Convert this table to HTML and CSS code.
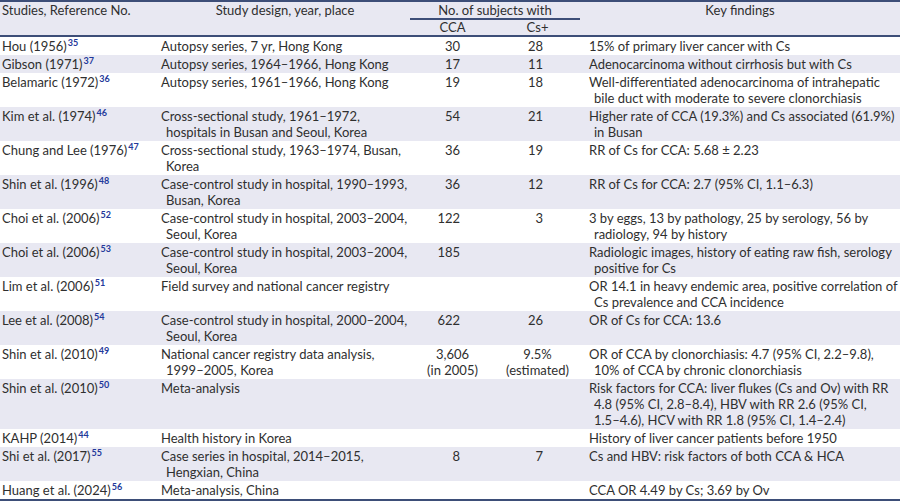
FILE: index.html
```html
<!DOCTYPE html>
<html lang="en">
<head>
<meta charset="utf-8">
<title>Studies on clonorchiasis and cholangiocarcinoma</title>
<link rel="stylesheet" href="styles.css">
</head>
<body>
<div class="wrap">
<table class="tbl">
<colgroup>
<col class="c1"><col class="c2"><col class="c3"><col class="c4"><col class="c5">
</colgroup>
<thead>
<tr class="hrow1">
<th rowspan="2" class="h-study">Studies, Reference No.</th>
<th rowspan="2" class="h-design">Study design, year, place</th>
<th colspan="2" class="h-group">No. of subjects with</th>
<th rowspan="2" class="h-key">Key findings</th>
</tr>
<tr class="hrow2">
<th class="h-sub">CCA</th>
<th class="h-sub">Cs+</th>
</tr>
</thead>
<tbody>
<tr><td class="study">Hou (1956)<sup class="ref">35</sup></td><td class="design">Autopsy series, 7 yr, Hong Kong</td><td class="num">30</td><td class="num cs">28</td><td class="key">15% of primary liver cancer with Cs</td></tr>
<tr><td class="study">Gibson (1971)<sup class="ref">37</sup></td><td class="design">Autopsy series, 1964–1966, Hong Kong</td><td class="num">17</td><td class="num cs">11</td><td class="key">Adenocarcinoma without cirrhosis but with Cs</td></tr>
<tr><td class="study">Belamaric (1972)<sup class="ref">36</sup></td><td class="design">Autopsy series, 1961–1966, Hong Kong</td><td class="num">19</td><td class="num cs">18</td><td class="key">Well-differentiated adenocarcinoma of intrahepatic<br>bile duct with moderate to severe clonorchiasis</td></tr>
<tr><td class="study">Kim et al. (1974)<sup class="ref">46</sup></td><td class="design">Cross-sectional study, 1961–1972,<br>hospitals in Busan and Seoul, Korea</td><td class="num">54</td><td class="num cs">21</td><td class="key">Higher rate of CCA (19.3%) and Cs associated (61.9%)<br>in Busan</td></tr>
<tr><td class="study">Chung and Lee (1976)<sup class="ref">47</sup></td><td class="design">Cross-sectional study, 1963–1974, Busan,<br>Korea</td><td class="num">36</td><td class="num cs">19</td><td class="key">RR of Cs for CCA: 5.68 ± 2.23</td></tr>
<tr><td class="study">Shin et al. (1996)<sup class="ref">48</sup></td><td class="design">Case-control study in hospital, 1990–1993,<br>Busan, Korea</td><td class="num">36</td><td class="num cs">12</td><td class="key">RR of Cs for CCA: 2.7 (95% CI, 1.1–6.3)</td></tr>
<tr><td class="study">Choi et al. (2006)<sup class="ref">52</sup></td><td class="design">Case-control study in hospital, 2003–2004,<br>Seoul, Korea</td><td class="num">122</td><td class="num cs">3</td><td class="key">3 by eggs, 13 by pathology, 25 by serology, 56 by<br>radiology, 94 by history</td></tr>
<tr><td class="study">Choi et al. (2006)<sup class="ref">53</sup></td><td class="design">Case-control study in hospital, 2003–2004,<br>Seoul, Korea</td><td class="num">185</td><td class="num cs"></td><td class="key">Radiologic images, history of eating raw fish, serology<br>positive for Cs</td></tr>
<tr><td class="study">Lim et al. (2006)<sup class="ref">51</sup></td><td class="design">Field survey and national cancer registry</td><td class="num"></td><td class="num cs"></td><td class="key">OR 14.1 in heavy endemic area, positive correlation of<br>Cs prevalence and CCA incidence</td></tr>
<tr><td class="study">Lee et al. (2008)<sup class="ref">54</sup></td><td class="design">Case-control study in hospital, 2000–2004,<br>Seoul, Korea</td><td class="num">622</td><td class="num cs">26</td><td class="key">OR of Cs for CCA: 13.6</td></tr>
<tr><td class="study">Shin et al. (2010)<sup class="ref">49</sup></td><td class="design">National cancer registry data analysis,<br>1999–2005, Korea</td><td class="num center">3,606<br>(in 2005)</td><td class="num cs center">9.5%<br>(estimated)</td><td class="key">OR of CCA by clonorchiasis: 4.7 (95% CI, 2.2–9.8),<br>10% of CCA by chronic clonorchiasis</td></tr>
<tr><td class="study">Shin et al. (2010)<sup class="ref">50</sup></td><td class="design">Meta-analysis</td><td class="num"></td><td class="num cs"></td><td class="key">Risk factors for CCA: liver flukes (Cs and Ov) with RR<br>4.8 (95% CI, 2.8–8.4), HBV with RR 2.6 (95% CI,<br>1.5–4.6), HCV with RR 1.8 (95% CI, 1.4–2.4)</td></tr>
<tr><td class="study">KAHP (2014)<sup class="ref">44</sup></td><td class="design">Health history in Korea</td><td class="num"></td><td class="num cs"></td><td class="key">History of liver cancer patients before 1950</td></tr>
<tr><td class="study">Shi et al. (2017)<sup class="ref">55</sup></td><td class="design">Case series in hospital, 2014–2015,<br>Hengxian, China</td><td class="num">8</td><td class="num cs">7</td><td class="key">Cs and HBV: risk factors of both CCA &amp; HCA</td></tr>
<tr><td class="study">Huang et al. (2024)<sup class="ref">56</sup></td><td class="design">Meta-analysis, China</td><td class="num"></td><td class="num cs"></td><td class="key">CCA OR 4.49 by Cs; 3.69 by Ov</td></tr>
</tbody>
</table>
</div>
</body>
</html>
```

FILE: styles.css
```css
html, body {
  margin: 0;
  padding: 0;
  background: #ffffff;
}

body {
  font-family: "Lato", "Liberation Sans", sans-serif;
  font-size: 13px;
  color: #2f2f2f;
}

.wrap {
  width: 900px;
  border-top: 2px solid #3d4e78;
  border-bottom: 2px solid #3d4e78;
}

.tbl {
  width: 900px;
  table-layout: fixed;
  border-collapse: separate;
  border-spacing: 0;
}

.c1 { width: 152px; }
.c2 { width: 258px; }
.c3 { width: 85px; }
.c4 { width: 85px; }
.c5 { width: 320px; }

th, td {
  padding: 1px 0;
  line-height: 16px;
  vertical-align: top;
  white-space: nowrap;
}

thead th {
  background: #e8e8f2;
  font-weight: normal;
  text-align: center;
  padding: 0;
}

thead .hrow2 th,
thead th[rowspan] {
  border-bottom: 2px solid #3d4e78;
}

.hrow2 th {
  line-height: 15px;
}

.h-study {
  text-align: left;
  padding-left: 2px;
}

thead .h-design {
  padding-left: 8px;
}

thead .h-study {
  padding-left: 2px;
}

.h-group {
  border-bottom: 2px solid #3d4e78;
}

tbody tr:nth-child(even) td {
  background: #e8e8f2;
}

.study {
  padding-left: 2px;
}

.design,
.key {
  padding-left: 14px;
  text-indent: -5px;
}

.num {
  text-align: right;
  padding-right: 35px;
}

.num.cs {
  padding-right: 37px;
}

.num.center {
  text-align: center;
  padding-right: 0;
}

.ref {
  font-size: 9px;
  font-weight: bold;
  color: #23389a;
  line-height: 0;
  vertical-align: 5px;
  margin-left: 1px;
}
```
